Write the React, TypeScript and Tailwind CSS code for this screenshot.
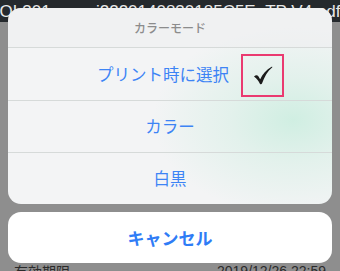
import React from 'react';

const jp = { fontFamily: '"Noto Sans CJK JP", "Noto Sans", sans-serif' };

function CheckMark() {
    return (
        <svg width="20" height="19" viewBox="0 0 20 19">
            <path
                d="M1 10.5 C2.2 9.4 3.4 8.9 4.4 9.4 C5.4 10 6.3 11.6 7.2 13.3 C9.6 8.2 13.2 3.6 18.6 0.8 C19.3 0.5 19.6 1 19.1 1.4 C14.6 5.2 11.4 10.4 9 17.6 C8.7 18.5 7.4 18.6 6.9 17.7 C5.6 15.2 4.1 12.6 1 10.5 Z"
                fill="#1c1c1c"
            />
        </svg>
    );
}

export default function App() {
    return (
        <div className="relative w-[340px] h-[271px] overflow-hidden bg-[#8e8e8e]" style={jp}>
            {/* page behind the sheet */}
            <div className="flex flex-col h-full">
                <div className="h-[22px] bg-[#25292d] flex justify-center overflow-hidden pt-[3px]">
                    <span className="text-[17px] leading-[17px] text-[#e8e8e8] font-medium whitespace-nowrap" style={{ fontFamily: '"Liberation Sans", sans-serif' }}>
                        OL301_ovrwi2220140830185C5E_TP V4.pdf
                    </span>
                </div>
                <div className="flex-1" />
                <div className="flex justify-between px-[14px] h-[9px] text-[14px] leading-[18px] text-[#2b2b2b]">
                    <span>有効期限</span>
                    <span style={{ fontFamily: '"Liberation Sans", sans-serif' }}>2019/12/26 22:59</span>
                </div>
            </div>

            {/* action sheet */}
            <div className="absolute inset-0 px-[8px] pt-[8px] flex flex-col gap-[8px]">
                <div
                    className="h-[196px] rounded-[13px] overflow-hidden flex flex-col bg-[#f3f4f5]"
                    style={{ backgroundImage: 'radial-gradient(ellipse 140px 95px at 285px 112px, rgba(206,238,225,0.95) 0%, rgba(220,240,232,0.7) 45%, rgba(243,244,245,0) 100%)' }}
                >
                    <div className="h-[39px] flex items-center justify-center text-[12px] text-[#8c8c8c] font-medium bg-[#eeeff0]/60">
                        カラーモード
                    </div>
                    <div className="h-px bg-[#d6dad9]" />
                    <div className="relative h-[52px] flex items-center justify-center pr-[14px] text-[16.5px] text-[#3d84f5]">
                        プリント時に選択
                        <div className="absolute left-[233px] top-[6px] w-[43px] h-[43px] border-2 border-[#ea3a70] flex items-center justify-center">
                            <CheckMark />
                        </div>
                    </div>
                    <div className="h-px bg-[#d6dad9]" />
                    <div className="h-[51px] flex items-center justify-center text-[16.5px] text-[#3d84f5]">カラー</div>
                    <div className="h-px bg-[#d6dad9]" />
                    <div className="h-[51px] flex items-center justify-center text-[16.5px] text-[#3d84f5]">白黒</div>
                </div>
                <div className="h-[51px] rounded-[13px] bg-white flex items-center justify-center text-[17px] font-bold text-[#2f7cf6]">
                    キャンセル
                </div>
            </div>
        </div>
    );
}
